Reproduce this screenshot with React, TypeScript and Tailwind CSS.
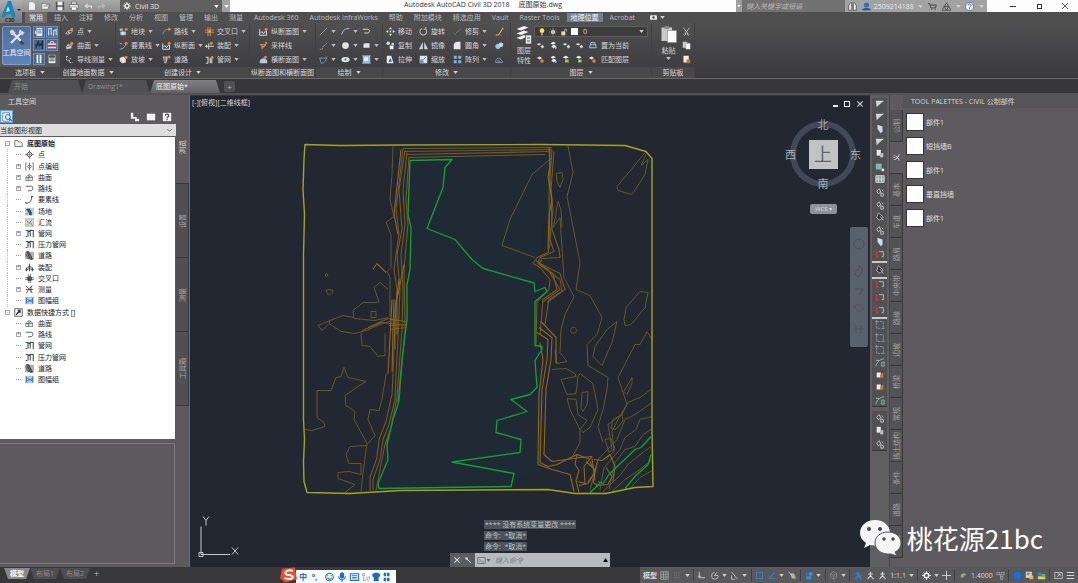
import type { ReactNode } from "react";
import clsx from "clsx";

/* ---------- icons ---------- */

const W = "#d4d6d8";
const B = "#7fb2e6";
const O = "#e8862e";

const glyphs: Record<string, ReactNode> = {
  newFile: <path d="M2 1h6l2 3v7H2z" fill="#f2f2f2" stroke="#777" strokeWidth=".6" />,
  open: <path d="M1 3h4l1 1h4v2l-2 4H1zM3 6h8" fill="#ececec" stroke="#666" strokeWidth=".8" />,
  save: <><path d="M1 1h10v10H1z" fill="#555" /><path d="M3 1h6v4H3zM3 7h6v4H3z" fill="#f0f0f0" /></>,
  print: <><path d="M3 1h6v3H3zM1 4h10v5H1z" fill="#eee" stroke="#555" strokeWidth=".8" /><path d="M3 7h6v4H3z" fill="#fff" stroke="#555" strokeWidth=".6" /></>,
  undo: <path d="M10 9V6H3M5.500 3.500L3 6l2.500 2.500" fill="none" stroke="#ddd" strokeWidth="1.500" />,
  redo: <path d="M2 9V6h7M6.500 3.500L9 6 6.500 8.500" fill="none" stroke="#bbb" strokeWidth="1.500" />,
  gear: <><circle cx="6" cy="6" r="3" fill="none" stroke="#eee" strokeWidth="2" /><path d="M6 0v3M6 9v3M0 6h3M9 6h3M2 2l2 2M8 8l2 2M10 2L8 4M4 8l-2 2" stroke="#eee" strokeWidth="1.200" /></>,
  binoculars: <path d="M1 11V5l2-4h2v10zM11 11V5L9 1H7v10zM5 5h2" fill="#eee" stroke="#444" />,
  user: <><circle cx="6" cy="4" r="3.500" fill="#2f6fc0" /><path d="M0 11c1-4 11-4 12 0z" fill="#1f4f93" /></>,
  cart: <path d="M0 2h2l2 6h6l1-4H3M4 10h1M9 10h1" fill="none" stroke="#444" strokeWidth="1.300" />,
  appA: <path d="M6 1l3 5H3zM3 6l3 5H0zM9 6l3 5H6z" fill="none" stroke="#444" strokeWidth="1.100" />,
  help: <><circle cx="6" cy="6" r="5.500" fill="#f3f6fb" stroke="#3c66a8" /><path d="M4 4.500c0-2.500 4-2.500 4 0 0 1.500-2 1.500-2 3M6 8.500v1.300" fill="none" stroke="#2f58a0" strokeWidth="1.300" /></>,
  tools: <><path d="M2 10L9 3M3 3l7 7" stroke="#dfe3e8" strokeWidth="1.600" /><path d="M1 2l2-1 2 2-1 2-2-.5zM8 1l3 2-1.500 2L7 3z" fill="#cfd5dd" /><path d="M9 8l2 2-1.500 1.500-2-2z" fill="#444" /></>,
  paper: <><path d="M3 1h7v10H3z" fill="#eaf1fa" /><path d="M4 3h5M4 5h5M4 7h5" stroke="#4a6fa5" /><path d="M1 4l3 3-3 2z" fill={W} /></>,
  columns: <path d="M2 3v7M5 1v9M8 4v7M11 2v8M1 2h4M8 4h3" stroke="#e5edf7" strokeWidth="1.200" fill="none" />,
  survey: <path d="M2 10l3-8 2 5 3-5v9M1 6h10" stroke="#1f2a3a" strokeWidth="1.400" fill="none" />,
  toolbox: <><path d="M1 4h10v6H1z" fill="#d5d9e0" /><path d="M1 6h10v2H1z" fill="#c33" /><path d="M4 4V2h4v2" fill="none" stroke="#eee" /></>,
  column: <><path d="M3 1h6v10H3z" fill="#e4ecec" /><path d="M5 1h2v10H5z" fill="#6b8f8b" /></>,
  calc: <><path d="M2 1h8v10H2z" fill="#eee" /><path d="M3 2h6v2H3zM3 6h6M3 8h6" stroke="#444" fill="#555" /></>,
  point: <><path d="M1 9c2-4 5-5 9-4-2 4-5 5-9 4z" fill="none" stroke={W} /><circle cx="5" cy="7" r="1.200" fill={W} /><circle cx="9" cy="3" r="2" fill={O} /></>,
  surface: <><path d="M1 8l3-4 6 1-2 5-6 1z" fill="#c9ced2" stroke="#777" strokeWidth=".5" /><path d="M2 8l5-2 2 1" stroke="#555" fill="none" /><circle cx="9" cy="3" r="2" fill={O} /></>,
  traverse: <path d="M2 2v5h4v3h4M2 2h2M6 5l3-1" stroke={W} fill="none" strokeDasharray="2 1" strokeWidth="1.300" />,
  parcel: <><path d="M1 2h4v3H1zM2 6h7v5H2z" fill="#9fc4ea" /><path d="M2 8h7M5 6v5" stroke="#fff" strokeWidth=".7" /><circle cx="9.500" cy="3" r="2" fill={O} /></>,
  feature: <><path d="M1 11c4 0 7-3 8-7M1 3l3 1" stroke="#9db4cf" fill="none" strokeWidth="1.200" /><circle cx="9.500" cy="3" r="2" fill={O} /></>,
  grading: <><path d="M1 4l5-2 3 3v5l-5 1-3-3z" fill="#e6e6e6" /><path d="M1 8l3-1v4z" fill="#bbb" /><circle cx="9.500" cy="3" r="2" fill={O} /></>,
  align: <><path d="M1 10c1-5 4-7 8-7" stroke="#5b83d8" fill="none" strokeWidth="1.500" /><circle cx="9.500" cy="3" r="2" fill={O} /></>,
  profile: <><path d="M1 3v8h9V5M2 8l2-2 2 3 3-4" stroke="#d8e2ee" fill="none" strokeWidth="1.300" /><circle cx="9.500" cy="3" r="2" fill={O} /></>,
  corridor: <><path d="M1 2h7l-2 9H3z" fill="#b7c0c6" /><path d="M4 3v7" stroke="#454545" strokeWidth="1.300" /><circle cx="9.500" cy="2.500" r="2" fill={O} /></>,
  cross: <><path d="M0 4h12M0 7h12M4 0v12M7 0v12" stroke={O} strokeWidth="1.200" /><path d="M5 5h2v2H5z" fill="#eee" /></>,
  assembly: <><path d="M0 7h12M5 3v8M2 5v4" stroke={W} strokeWidth="1.300" /><circle cx="8.500" cy="3" r="2" fill={O} /></>,
  pipe: <><path d="M1 3h3v8M7 5v6M1 11h3M9 11V5H6" stroke={W} fill="none" strokeWidth="1.500" /><circle cx="9.500" cy="3" r="2" fill={O} /></>,
  sample: <><path d="M1 5h8M4 5v6M4 8c3 0 4-1 5-4" stroke="#d99a5a" fill="none" strokeWidth="1.400" /><circle cx="9.500" cy="2.500" r="1.500" fill={O} /></>,
  section: <><path d="M1 8c2-5 8-5 10 0v3H1z" fill="#b9c6ea" /><circle cx="8.500" cy="3" r="2" fill={O} /></>,
  line: <path d="M1 11L11 1" stroke="#a8aaac" strokeWidth="1" />,
  polyline: <path d="M1 11h3l2-5h2l3-4" stroke="#a8aaac" fill="none" strokeDasharray="2 1" />,
  spline: <path d="M1 4l2 7M3 11c5 0 6-4 8-9M1 4h9" stroke="#8fa9c9" fill="none" />,
  arc: <path d="M1 10C2 4 6 2 11 2" stroke="#b6c7ea" fill="none" strokeWidth="1.300" />,
  circle: <circle cx="6" cy="6" r="4.500" fill="#e1e1e1" />,
  ellipse: <><ellipse cx="6" cy="6" rx="5.500" ry="3.500" fill="#dde4ea" /><circle cx="6" cy="6" r="1.200" fill="#555" /></>,
  uturn: <path d="M1 3h6c4 0 4 5 0 5H3" stroke={W} fill="none" strokeWidth="1.300" />,
  rect: <path d="M2 4l2-1h6v6H2z" fill="#e6e6e6" />,
  hatch: <><path d="M1 1h10v10H1z" fill="#8fbfe8" /><path d="M3 3h5v5H3z" fill="#eef" /><path d="M0 1h12M0 11h12" stroke="#e8eef4" strokeWidth=".6" /></>,
  move: <path d="M6 0l2 3H4zM6 12l2-3H4zM0 6l3-2v4zM12 6L9 4v4zM5 5h2v2H5z" fill="#e3e6e9" />,
  copy: <><circle cx="3" cy="3" r="2.300" fill="#cfe0f4" /><circle cx="9" cy="4" r="1.800" fill={W} /><path d="M5 6h5v5H5z" fill="#eee" /></>,
  stretch: <><path d="M1 1h6l3 10H1z" fill="#e9eef4" /><path d="M3 9l3-5 2 5z" fill="#3d6090" /></>,
  rotate: <path d="M4 2a4.500 4.500 0 1 0 5 1M9 0v3H6" fill="none" stroke="#b9bdc1" strokeWidth="1.400" />,
  mirror: <path d="M5 1v10H0zM7 1v10h5z" fill="#cdd5df" />,
  scale: <><path d="M1 1h10v10H1z" fill="#d7e3f3" /><path d="M1 6h5v5H1z" fill="#7895bf" /><path d="M6 6l3-3" stroke="#456" /></>,
  trim: <path d="M1 8l3 3M4 8l7-6" stroke="#6e8578" strokeWidth="1.200" />,
  fillet: <path d="M1 11V6c0-3 2-5 5-5h4v10z" fill="#e8e8e8" />,
  array: <path d="M1 1h4v4H1zM7 1h4v4H7zM1 7h4v4H1zM7 7h4v4H7z" fill={B} />,
  brush: <><path d="M1 11l4-1 6-9" stroke="#e6b23c" strokeWidth="1.600" fill="none" /><path d="M3 11h6" stroke="#c8553a" /></>,
  explode: <><circle cx="4" cy="7" r="3.500" fill="#9cc5f0" /><circle cx="8" cy="5" r="3" fill="#c4ddf6" /></>,
  offset: <path d="M1 10V7l3-3 3 1 3 4v1zM3 8h4" fill="none" stroke="#6fa0d8" strokeWidth="1.200" />,
  layers: <><path d="M1 2l5-2 3 1-5 2zM1 5l5-2 3 1-5 2zM1 8l5-2 2 1-4 2z" fill="#f4f4f4" /><path d="M7 6h4v6H7z" fill="#e9e9e9" stroke="#555" strokeWidth=".5" /><path d="M8 8h2M8 10h2" stroke="#555" strokeWidth=".7" /></>,
  layerA: <><path d="M1 4l3-1 3 1-3 2z" fill="#e8e8e8" /><path d="M6 7l3-2 2 3-3 2z" fill={W} /></>,
  layerB: <><path d="M2 3l4-2 3 2-4 2zM3 7l4-2 3 2-4 3z" fill="#eee" /><circle cx="9" cy="9" r="1.500" fill={B} /></>,
  layerC: <><path d="M1 3l4-2 4 2-4 2z" fill="#eee" /><path d="M4 6h5v4H4z" fill="#7bc04b" /><circle cx="6" cy="8" r="1.300" fill="#f3c93f" /></>,
  layerD: <><path d="M1 4l4-2 3 2-3 2z" fill="#e6e6e6" /><path d="M6 6h4v4H6z" fill={O} /></>,
  layerE: <path d="M2 9l2-7h5l2 7zM3 5h7" fill="none" stroke="#9ec5f1" strokeWidth="1.300" />,
  bulb: <><circle cx="6" cy="4" r="3.500" fill="#f6e36a" /><path d="M4.500 8h3v3h-3z" fill="#aaa" /></>,
  sun: <><circle cx="6" cy="6" r="3" fill="#e9e4c0" /><path d="M6 0v12M0 6h12M2 2l8 8M10 2l-8 8" stroke="#b5b196" strokeWidth=".8" /></>,
  lock: <><path d="M2 5h6v6H2z" fill="#e5e0a0" /><path d="M7 5V2h3v3" fill="none" stroke={W} /></>,
  paste: <><path d="M1 1h7v9H1z" fill="#c9c9c9" /><path d="M3 0h3v2H3z" fill="#888" /><path d="M5 3h6v8H5z" fill="#fafafa" stroke="#888" strokeWidth=".4" /></>,
  cut: <path d="M2 1l6 8M10 1L4 9M2 10a1.500 1.500 0 1 0 2-2M10 10a1.500 1.500 0 1 1-2-2" stroke={W} fill="none" />,
  copyDoc: <><path d="M1 1h6v8H1z" fill="#ccc" /><path d="M5 3h6v8H5z" fill="#fff" stroke="#777" strokeWidth=".5" /></>,
  pasteDoc: <><path d="M2 1h7v9H2z" fill="#eee" /><path d="M6 6h5v5H6z" fill="#c96b35" /></>,
  camera: <><rect x="0" y="2" width="12" height="8" rx="2" fill="#e8e8e8" /><circle cx="6" cy="6" r="2" fill="#333" /></>,
  folder: <path d="M1 10V2h4l1 2h4l1 2v4z" fill="#f5f5f5" stroke="#555" />,
  shortcut: <><path d="M1 1h10v10H1z" fill="#fff" stroke="#333" /><path d="M3 9l5-6M5 3h3v4" fill="none" stroke="#222" strokeWidth="1.600" /></>,
  tPoint: <><path d="M6 2l4 4-4 4-4-4z" fill="none" stroke="#444" strokeWidth="1.300" /><path d="M6 0v12M0 6h12" stroke="#555" strokeWidth=".8" /></>,
  tGroup: <path d="M2 1H1v10h1M10 1h1v10h-1M6 3l3 3-3 3-3-3zM6 1v10" fill="none" stroke="#555" />,
  tSurface: <path d="M1 6l4-4 5 3v5H1zM1 6h9M5 2v8M3 8l5-5" fill="#e3e9e6" stroke="#56635f" strokeWidth=".9" />,
  tAlign: <path d="M1 3h8c2 0 2 6-1 6H4" fill="none" stroke="#555" strokeWidth="1.200" />,
  tFeature: <path d="M1 11c5 0 8-3 8-9M0 10l2 1M8 2h3" fill="none" stroke="#445" strokeWidth="1.300" />,
  tSite: <><path d="M0 1h12v10H0z" fill="#b6d2e6" /><path d="M1 3l5-1 3 5v4H6L4 6z" fill="#36506a" /><path d="M1 8h3v3H1z" fill="#d7b54d" /></>,
  tCatch: <><path d="M0 1h12v10H0z" fill="#cfd9cf" stroke="#78867c" strokeWidth=".6" /><path d="M2 3l3 4 2-1 3 4M9 3L6 6" stroke="#4b6b86" fill="none" /><path d="M2 8h3v2H2z" fill="#d9bd53" /></>,
  tPipe: <path d="M1 2h3v8M4 4l3-2v8M7 2h4v9M1 10h2" fill="none" stroke="#3d4a4d" strokeWidth="1.400" />,
  tRoad: <><path d="M0 1h12v10H0z" fill="#aeb3ad" /><path d="M2 1h3l5 10H7zM1 4l4 7" stroke="#333" strokeWidth="1.100" fill="#666" /></>,
  tAssembly: <path d="M0 9h4V5h4v4h4M6 1v10M2 6v5M10 6v5" fill="none" stroke="#444" strokeWidth="1.200" />,
  tCross: <><circle cx="6" cy="6" r="3.500" fill="#666" /><path d="M0 5h12M0 7.500h12M5 0v12M7.500 0v12" stroke="#444" strokeWidth=".9" /></>,
  tSurvey: <path d="M1 1l4 4-3 6M5 5l5-4M5 5l5 6M1 6h10M8 2v8" fill="none" stroke="#444" strokeWidth="1.100" />,
  tFrame: <><path d="M0 1h12v10H0z" fill="#a8cdea" /><path d="M2 2v8M10 2v8M2 4l8 4M2 8l8-3" stroke="#3a6a97" fill="none" /></>,
  search: <><path d="M1 1h8v10H1z" fill="#fff" stroke="#4b7ca8" /><circle cx="7" cy="6" r="3" fill="#cfe6f8" stroke="#2b5d8e" /><path d="M9 8l3 3" stroke="#2b5d8e" strokeWidth="1.500" /></>,
  filter: <path d="M1 1h3v5h4v2h3v3H6V8H1z" fill="#eee" />,
  winBox: <path d="M1 2h10v8H1z" fill="#f4f4f4" />,
  qBox: <><path d="M1 1h10v10H1z" fill="#f4f4f4" /><path d="M4 4.500c0-2.500 4-2.500 4 0 0 1.500-2 1.500-2 3M6 8.500v1.300" fill="none" stroke="#444" strokeWidth="1.400" /></>,
  vTri: <path d="M1 2h10L6 6l-4 4z" fill="#cfd4d8" />,
  vPage: <path d="M3 1l6 2v6l-2 2-4-5z" fill="#cfdcea" />,
  vDoc: <><path d="M2 1h5v7H2z" fill="#e6e6e6" /><path d="M6 5h4v5H6z" fill="#bbb" /></>,
  vTeal: <><path d="M1 2h7v7H1z" fill="#7fb9b3" /><path d="M8 8h3v3H8z" fill="#eee" /></>,
  vGlobe: <path d="M1 2h10v8H1zM1 6h10M4 2v8M8 2v8" fill="#8e9896" stroke="#dfe6e4" />,
  vDots: <path d="M2 5l3-3 2 4-3 2zM7 7l3 1v3H7zM8 3l2 2" fill="none" stroke="#d0d0d0" />,
  vDark: <path d="M4 1l6 5-4 4-4-3zM6 5l4 5" fill="#2d2d2d" stroke="#c4c4c4" />,
  vRed: <><path d="M1 3h3M1 8h3M2 1v9" stroke="#c23b3b" strokeWidth="1.400" /><path d="M5 2h5v6H8" stroke="#cacaca" fill="none" /></>,
  vBox: <path d="M2 2h8v8H2zM0 2h3M9 10h3M2 0v3" fill="none" stroke="#8798b4" strokeDasharray="3 1" />,
  vCurve: <path d="M1 11C3 5 6 3 11 2M1 4h4M8 6v5h3V6z" fill="none" stroke="#9cc7c3" />,
  vOrange: <><path d="M2 3h5v6H2z" fill="#eee" /><path d="M6 6l4-3v6H6z" fill="#cf7638" /></>,
  sGrid: <path d="M1 1h10v10H1zM1 4.500h10M1 8h10M4.500 1v10M8 1v10" fill="none" stroke="#aaa" />,
  sDots: <path d="M2 2v9M5 2v9M8 2v9" stroke="#888" strokeDasharray="1 2" />,
  sOrtho: <path d="M3 1v8h8M1 7h4" fill="none" stroke={W} strokeWidth="1.100" />,
  sPolar: <path d="M6 2a4.500 4.500 0 1 0 5 5M6 6h5M6 6L9 2" fill="none" stroke={W} />,
  sIso: <path d="M2 1l8 10M2 6v5h5" fill="none" stroke={W} />,
  sBox: <path d="M2 2h8v8H2z" fill="none" stroke="#2f7dd6" strokeWidth="1.600" />,
  sAngle: <path d="M2 10L10 2M2 10h9" fill="none" stroke="#2f7dd6" strokeWidth="1.600" />,
  sLeaf: <><path d="M3 3h5l3 7H5z" fill="#9cb08b" /><path d="M1 1l7 9" stroke={W} /></>,
  sPeople: <><circle cx="4" cy="4" r="3" fill="#1f6fc4" /><path d="M3 7h7v4H3z" fill="#2f8de6" /><path d="M7 2h4v4H7z" fill="#3aa0ee" /></>,
  sCube: <path d="M6 1l4 2.500v5L6 11 2 8.500v-5zM6 6v5M2 3.500L6 6l4-2.500" fill="none" stroke="#8e8e8e" />,
  sMan: <path d="M6 1v5M6 6l-4 5M6 6l4 5M3 4h6" fill="none" stroke={W} strokeWidth="1.600" />,
  sManBlue: <path d="M6 1v5M6 6l-4 5M6 6l4 5M2 3l8 4" fill="none" stroke="#2b80e0" strokeWidth="2" />,
  sPlus: <path d="M6 0v12M0 6h12" stroke={W} strokeWidth="1.200" />,
  sEarth: <path d="M2 7c1-5 7-5 8-2-3 0-3 3-6 5z" fill="#97a286" />,
  sTree: <path d="M1 2h4v3H1zM7 2h4v3H7zM6 7h3v4H6zM5 4l2 4" fill="none" stroke="#aaa" />,
  sBall: <><path d="M0 0h12v12H0z" fill="#3b5c85" /><circle cx="6" cy="6" r="5" fill="#1173e0" /></>,
  sHw: <><path d="M1 1h8v8H1z" fill="#ddd" /><path d="M6 6h5v5H6z" fill="#e4c43f" /><path d="M2 3h5M2 5h4" stroke="#555" /></>,
  sPic: <><path d="M1 2h5v4H1z" fill="#3f7fd0" /><path d="M1 7h10v4H1z" fill="#dfd357" /><path d="M6 4h5v4H6z" fill="#65b25a" /></>,
  sFull: <path d="M1 2h10v8H1zM4 8l4-4M5 4h3v3" fill="none" stroke={W} />,
  sMenu: <path d="M1 2h10M1 6h10M1 10h10" stroke={W} strokeWidth="1.400" />,
  wrench: <path d="M2 2l3 0 1 3 5 5-1 1-5-5-3-1z" fill={W} />,
  close: <path d="M2 2l8 8M10 2l-8 8" stroke={W} strokeWidth="1.600" />,
  prompt: <path d="M1 2h10v8H1zM3 4l2 2-2 2M6 8h3" fill="none" stroke="#666" />,
};

const Icon = ({ name, className = "size-[10px]" }: { name: string; className?: string }) => (
  <svg viewBox="0 0 12 12" className={clsx("shrink-0", className)} aria-hidden="true">
    {glyphs[name]}
  </svg>
);

const Caret = ({ className = "fill-[#d0d0d0]" }: { className?: string }) => (
  <svg viewBox="0 0 6 4" className={clsx("h-[3px] w-[5px] shrink-0", className)} aria-hidden="true">
    <path d="M0 0h6L3 4z" />
  </svg>
);

/* ---------- title bar ---------- */

const TitleBar = () => (
  <div className="flex h-3 items-stretch bg-[#fdfdfd]">
    <div className="flex w-[98px] items-center gap-1 bg-linear-to-b from-[#a9a9a9] to-[#8f8f8f] pl-[5px]">
      {["newFile", "open", "save", "print", "undo", "redo"].map((n) => (
        <button key={n} aria-label={n}>
          <Icon name={n} />
        </button>
      ))}
    </div>
    <label className="flex w-[102px] items-center gap-1 bg-[#606060] px-[3px]">
      <Icon name="gear" className="size-2" />
      <select aria-label="workspace" className="min-w-0 flex-1 appearance-none text-[7px] leading-none text-[#e4e4e4]">
        <option>Civil 3D</option>
      </select>
      <Caret className="fill-white" />
    </label>
    <button aria-label="customize" className="flex w-2 items-center justify-center bg-[#a3a3a3]">
      <Caret className="fill-white" />
    </button>
    <div className="flex flex-1 items-start justify-center gap-[9px] pt-px text-[7px] leading-[8px] text-[#333]">
      <span>Autodesk AutoCAD Civil 3D 2018</span>
      <span>底图原始.dwg</span>
    </div>
    <div className="flex w-[109px] items-center bg-[#727272]">
      <span className="flex h-full w-[6px] items-center justify-center bg-[#a0a0a0] text-[5px] text-white">▸</span>
      <input
        aria-label="search"
        placeholder="键入关键字或短语"
        className="min-w-0 flex-1 px-1 text-[7px] italic leading-none outline-none placeholder:text-[#b9b9b9]"
      />
    </div>
    <div className="flex w-[142px] items-center justify-between bg-[#a2a2a2] px-[3px]">
      <Icon name="binoculars" className="size-[9px]" />
      <button className="flex items-center gap-[3px] text-[7px] leading-none text-[#e6e6e6]">
        <Icon name="user" className="size-[9px]" />
        2509214188
      </button>
      <Caret />
      <Icon name="cart" className="size-[9px]" />
      <Icon name="appA" className="size-[9px]" />
      <Caret />
      <Icon name="help" className="size-[9px]" />
      <Caret />
    </div>
    <div className="flex w-[91px] items-center justify-between pl-[23px] pr-[10px]">
      <button aria-label="minimize" className="h-px w-[6px] bg-[#333]" />
      <button aria-label="restore" className="size-[5px] border border-[#333]" />
      <button aria-label="close">
        <svg viewBox="0 0 6 6" className="size-[6px]">
          <path d="M0 0l6 6M6 0L0 6" stroke="#333" strokeWidth=".8" />
        </svg>
      </button>
    </div>
  </div>
);

const ribbonTabs = [
  "插入", "注释", "修改", "分析", "视图", "管理", "输出", "测量", "Autodesk 360", "Autodesk InfraWorks",
  "帮助", "附加模块", "精选应用", "Vault", "Raster Tools",
];

const RibbonTabs = () => (
  <nav className="flex h-[11px] items-center gap-[11px] bg-[#4f4f50] pl-[3px] text-[7px] leading-none text-[#bcbcbc]">
    <button className="-mr-1 h-full bg-[#6d6d6e] px-1 text-[#f0f0f0]">常用</button>
    {ribbonTabs.map((t) => (
      <button key={t} className="whitespace-nowrap">
        {t}
      </button>
    ))}
    <button className="-mx-1 h-[9px] bg-[#76808e] px-1 text-[#eef2f6]">地理位置</button>
    <button>Acrobat</button>
    <span className="flex items-center gap-[3px] pl-1">
      <Icon name="camera" className="size-[7px]" />
      <Caret />
    </span>
  </nav>
);

/* ---------- ribbon ---------- */

type Tool = { icon: string; label?: string; menu?: boolean };

const ToolColumn = ({ tools, className }: { tools: Tool[]; className?: string }) => (
  <div className={clsx("flex flex-col gap-[3px]", className)}>
    {tools.map((t) => (
      <button key={t.icon} aria-label={t.label ?? t.icon} className="flex h-[11px] items-center gap-[3px] whitespace-nowrap">
        <Icon name={t.icon} className="size-[9px]" />
        {t.label && <span>{t.label}</span>}
        {t.menu && <Caret className="fill-[#bbb]" />}
      </button>
    ))}
  </div>
);

const Panel = ({ title, menu = true, className, children }: { title: string; menu?: boolean; className: string; children: ReactNode }) => (
  <section className={clsx("flex shrink-0 flex-col border-r border-[#414142]", className)}>
    <div className="flex flex-1 items-start px-[3px] pt-[3px]">{children}</div>
    <footer className="flex h-[11px] items-center justify-center gap-1 whitespace-nowrap bg-[#484849]">
      {title}
      {menu && <Caret />}
    </footer>
  </section>
);

const Ribbon = () => (
  <div className="flex h-14 border-b border-[#6a6a6b] bg-linear-to-b from-[#505051] to-[#3a393b] text-[7px] leading-none text-[#d6d6d6]">
    <Panel title="选项板" className="w-[61px] bg-[#58585a]">
      <div className="-ml-px flex gap-[2px]">
        <button className="flex h-[39px] w-[29px] flex-col items-center gap-[3px] whitespace-nowrap rounded-xs border border-[#7d9cc6] bg-linear-to-b from-[#52709d] to-[#5d83b8] pt-px text-[#e9eef6]">
          <Icon name="tools" className="size-[18px]" />
          <span>工具空间</span>
        </button>
        <div className="grid grid-cols-2 gap-px">
          {["paper", "columns", "survey", "toolbox", "column", "calc"].map((n, i) => (
            <button
              key={n}
              aria-label={n}
              className={clsx("flex size-[12px] items-center justify-center", i < 5 && "border border-[#6f8fbc] bg-[#49688f]")}
            >
              <Icon name={n} />
            </button>
          ))}
        </div>
      </div>
    </Panel>
    <Panel title="创建地面数据" className="w-[55px]">
      <ToolColumn
        className="pl-px"
        tools={[
          { icon: "point", label: "点", menu: true },
          { icon: "surface", label: "曲面", menu: true },
          { icon: "traverse", label: "导线测量", menu: true },
        ]}
      />
    </Panel>
    <Panel title="创建设计" className="w-[134px]">
      <ToolColumn
        className="w-11"
        tools={[
          { icon: "parcel", label: "地块", menu: true },
          { icon: "feature", label: "要素线", menu: true },
          { icon: "grading", label: "放坡", menu: true },
        ]}
      />
      <ToolColumn
        className="w-11"
        tools={[
          { icon: "align", label: "路线", menu: true },
          { icon: "profile", label: "纵断面", menu: true },
          { icon: "corridor", label: "道路" },
        ]}
      />
      <ToolColumn
        tools={[
          { icon: "cross", label: "交叉口", menu: true },
          { icon: "assembly", label: "装配", menu: true },
          { icon: "pipe", label: "管网", menu: true },
        ]}
      />
    </Panel>
    <Panel title="纵断面图和横断面图" menu={false} className="w-[66px]">
      <ToolColumn
        className="pl-[6px]"
        tools={[
          { icon: "profile", label: "纵断面图", menu: true },
          { icon: "sample", label: "采样线" },
          { icon: "section", label: "横断面图", menu: true },
        ]}
      />
    </Panel>
    <Panel title="绘制" className="w-[67px]">
      <ToolColumn className="w-[22px]" tools={["line", "polyline", "spline"].map((icon) => ({ icon, menu: true }))} />
      <ToolColumn className="w-[21px]" tools={["arc", "circle", "ellipse"].map((icon) => ({ icon, menu: true }))} />
      <ToolColumn tools={[{ icon: "uturn" }, { icon: "rect", menu: true }, { icon: "hatch", menu: true }]} />
    </Panel>
    <Panel title="修改" className="w-32">
      <ToolColumn
        className="w-[33px]"
        tools={[
          { icon: "move", label: "移动" },
          { icon: "copy", label: "复制" },
          { icon: "stretch", label: "拉伸" },
        ]}
      />
      <ToolColumn
        className="w-[34px]"
        tools={[
          { icon: "rotate", label: "旋转" },
          { icon: "mirror", label: "镜像" },
          { icon: "scale", label: "缩放" },
        ]}
      />
      <ToolColumn
        className="w-[42px]"
        tools={[
          { icon: "trim", label: "修剪", menu: true },
          { icon: "fillet", label: "圆角", menu: true },
          { icon: "array", label: "阵列", menu: true },
        ]}
      />
      <ToolColumn tools={[{ icon: "brush" }, { icon: "explode" }, { icon: "offset" }]} />
    </Panel>
    <Panel title="图层" className="w-[141px]">
      <button className="flex w-5 flex-col items-center gap-[3px]">
        <Icon name="layers" className="size-[18px]" />
        <span>图层</span>
        <span>特性</span>
      </button>
      <div className="flex flex-1 flex-col gap-[3px]">
        <label className="flex h-[11px] items-center gap-[3px] border border-[#5c5c5d] bg-[#3c3c3d] px-[3px]">
          <Icon name="bulb" className="size-2" />
          <Icon name="sun" className="size-2" />
          <Icon name="lock" className="size-2" />
          <span className="size-[7px] bg-white" />
          <select aria-label="layer" className="min-w-0 flex-1 appearance-none pl-[2px] leading-none">
            <option>0</option>
          </select>
          <Caret />
        </label>
        {[
          { icons: ["layerA", "layerB", "layerA", "layerA", "layerE"], label: "置为当前" },
          { icons: ["layerD", "layerB", "layerC", "layerC", "layerD"], label: "匹配图层" },
        ].map((row) => (
          <div key={row.label} className="flex h-[11px] items-center gap-1 pl-[2px]">
            {row.icons.map((n, i) => (
              <Icon key={i} name={n} className="size-[9px]" />
            ))}
            <button>{row.label}</button>
          </div>
        ))}
      </div>
    </Panel>
    <Panel title="剪贴板" menu={false} className="w-[43px]">
      <button className="flex w-[27px] flex-col items-center gap-[3px]">
        <Icon name="paste" className="size-[18px]" />
        <span>粘贴</span>
        <Caret />
      </button>
      <ToolColumn tools={[{ icon: "cut" }, { icon: "copyDoc" }, { icon: "pasteDoc" }]} />
    </Panel>
  </div>
);

const DocTabs = () => (
  <div className="flex h-4 items-end border-b-2 border-[#525354] bg-[#373638] pl-2 text-[7px] leading-none">
    {[
      { label: "开始", width: "w-[74px]" },
      { label: "Drawing1*", width: "w-[68px]" },
      { label: "底图原始*", width: "w-[70px]", active: true },
    ].map((t) => (
      <button
        key={t.label}
        className={clsx(
          "h-[13px] pl-[6px] text-left [clip-path:polygon(4px_0,calc(100%-4px)_0,100%_100%,0_100%)]",
          t.width,
          t.active ? "bg-linear-to-b from-[#828284] to-[#626163] text-[#f2f2f2]" : "bg-[#515153] text-[#8e8e90]",
        )}
      >
        {t.label}
      </button>
    ))}
    <button className="mb-px ml-1 size-[11px] rounded-xs bg-[#515153] text-[8px] text-[#bbb]">+</button>
  </div>
);

/* ---------- toolspace ---------- */

type Row = { label: string; icon: string; root?: boolean; plus?: boolean };

const rows: Row[] = [
  { label: "底图原始", icon: "folder", root: true },
  { label: "点", icon: "tPoint" },
  { label: "点编组", icon: "tGroup", plus: true },
  { label: "曲面", icon: "tSurface", plus: true },
  { label: "路线", icon: "tAlign", plus: true },
  { label: "要素线", icon: "tFeature" },
  { label: "场地", icon: "tSite" },
  { label: "汇流", icon: "tCatch" },
  { label: "管网", icon: "tPipe", plus: true },
  { label: "压力管网", icon: "tPipe" },
  { label: "道路", icon: "tRoad" },
  { label: "装配", icon: "tAssembly", plus: true },
  { label: "交叉口", icon: "tCross" },
  { label: "测量", icon: "tSurvey", plus: true },
  { label: "图幅组", icon: "tFrame" },
  { label: "数据快捷方式 []", icon: "shortcut", root: true },
  { label: "曲面", icon: "tSurface" },
  { label: "路线", icon: "tAlign", plus: true },
  { label: "管网", icon: "tPipe" },
  { label: "压力管网", icon: "tPipe" },
  { label: "道路", icon: "tRoad" },
  { label: "图幅组", icon: "tFrame" },
];

const Expander = ({ minus }: { minus?: boolean }) => (
  <span className="flex size-[5px] items-center justify-center border border-[#aaa] bg-white text-[5px] leading-none text-[#555]">
    {minus ? "-" : "+"}
  </span>
);

const VerticalTab = ({ label, className }: { label: string; className?: string }) => (
  <button className={clsx("flex items-center justify-center border-b border-[#39383a] text-[7px] leading-none", className)}>
    <span className="rotate-180 [text-orientation:sideways] [writing-mode:vertical-rl]">{label}</span>
  </button>
);

const Toolspace = () => (
  <aside className="flex w-[190px] shrink-0 bg-[#5c5a5c]">
    <div className="flex w-44 flex-col">
      <h2 className="h-[14px] pl-2 text-[7px] leading-[14px] text-[#dcdcdc]">工具空间</h2>
      <div className="flex h-[15px] items-center gap-[6px] pr-1">
        <button aria-label="search" className="mr-auto flex h-[13px] w-[13px] items-center justify-center border border-[#5aa0dc] bg-[#d4e8f8]">
          <Icon name="search" />
        </button>
        <Icon name="filter" />
        <Icon name="winBox" />
        <Icon name="qBox" />
      </div>
      <label className="flex h-3 items-center bg-[#dedede] pr-1">
        <select aria-label="view" className="min-w-0 flex-1 appearance-none text-[7px] leading-none text-[#222]">
          <option>当前图形视图</option>
        </select>
        <svg viewBox="0 0 6 4" className="h-[3px] w-[5px]">
          <path d="M0 0l3 3 3-3" fill="none" stroke="#555" />
        </svg>
      </label>
      <div className="mr-px mt-px h-[302px] bg-white pt-px">
        <ul className="flex h-[247px] flex-col text-[7px] leading-none text-[#222]">
          {rows.map((r, i) => (
            <li
              key={i}
              className={clsx(
                "flex flex-1 items-center gap-1",
                r.root ? "pl-[5px]" : "ml-[7px] border-l border-dotted pl-2",
                !r.root && (i < 15 ? "border-[#bbb]" : "border-transparent"),
              )}
            >
              {r.root ? (
                <Expander minus />
              ) : (
                <span className="flex w-[5px] justify-center">
                  {r.plus ? <Expander /> : <span className="w-full border-t border-dotted border-[#999]" />}
                </span>
              )}
              <Icon name={r.icon} className="size-[9px]" />
              <span className={clsx(i === 0 && "font-bold")}>{r.label}</span>
            </li>
          ))}
        </ul>
      </div>
      <div className="mr-px mt-1 mb-[3px] flex-1 border-y border-r border-[#7c7a7c]" />
    </div>
    <div className="flex flex-1 flex-col border-r border-[#6e6c6e] pt-[15px] text-[#a5a5a5]">
      <VerticalTab label="浏览" className="h-[74px] text-[#dedede]" />
      {["设置", "测量", "工具箱"].map((t) => (
        <VerticalTab key={t} label={t} className="h-[74px] border-r bg-[#504f51]" />
      ))}
    </div>
  </aside>
);

/* ---------- drawing ---------- */

const contours = {
  dim: [
    "M393 147L392 175 390 200 394 217 386 223 391 235 391 268 387 272",
    "M387 272L390 278 390 318M388 290L380 283 374 288 379 302 376 303 363 303 353 311 354 319 375 321 388 318",
    "M353 318L343 316 330 321 329 324 341 332 355 334 366 331 380 325 390 322",
    "M330 321L318 326 322 331 329 324M371 312h5v6h-5z",
    "M361 333L362 346 370 347 378 357 385 356 385 334",
    "M305 430L312 431 325 427 324 423 317 418 317 391 331 391 336 378 341 377 344 368 348 378 366 382 358 387 345 396 346 406 355 412 354 420 367 444 365 458 363 474 361 492",
    "M388 374L386 375 382 400 379 411 370 410 368 420 375 436 367 445",
    "M367 446L350 447 346 455 349 464 361 464 361 475M361 475L349 472 338 473 338 479 355 485 345 493",
    "M325 275l2-1 1 2-2 1zM326 291l3-1 4 1-1 3-4 1z",
    "M552 158L532 175 510 220 502 246 535 258",
    "M568 146L573 173 567 197 580 263 576 290 590 296 602 318 597 335 587 345 588 366 608 378 607 390 603 410 598 427 603 443",
    "M556 174l6-1 1 7-3 8-3-6zM562 228L561 210 558 202 554 225 553 228 560 218 564 278 574 297",
    "M574 297L565 315 561 330 560 353 567 362 557 364 555 350M571 329a3 3 0 1 0 5 0 3 3 0 0 0-5 0",
    "M645 153L633 168 617 187 618 191 632 195 645 175 648 160 641 166 647 153",
    "M624 320L626 308 640 292 648 293 645 308 631 325 625 326z",
    "M617 322L612 343 602 366 593 357 595 347 607 330z",
    "M652 340L647 332 640 345 635 345 618 378 627 405 622 415 608 425 612 450",
    "M632 378l-8 14 3 3 5-11z",
    "M552 370L566 369 575 374 576 377 561 380 567 395 576 394 578 377 580 374 593 384 598 410 590 428 583 433 580 430 587 421 578 415 576 400 567 399 570 410 580 430 580 443 573 456",
    "M582 393l6-1-1 13-4 7-2-3z",
    "M622 415l-9 5-2 9 5 1 7-9z",
    "M652 403L635 415 625 420 617 440 598 460 590 490M652 417L640 420 636 430 625 438 620 450 604 468 600 490",
    "M651 430L643 435 635 447 625 450 615 463 609 490M651 447L640 455 628 465 620 476 603 492M652 460L640 470 625 480 612 492",
    "M652 471L640 478 630 489M651 390L640 398 628 403 618 420 612 432 614 452 606 460M605 440l6-1 4 10-6 4z",
  ],
  brown: [
    "M403 149L396 210 399 235 394 270 397 290 395 325 393 375 392 395 386 422 379 440 377 458 370 478 370 491",
    "M405 151L399 190 402 230 397 255 400 290 398 340 396 375 395 400 389 425 383 440 380 460 373 480 373 491",
    "M407 153L403 190 405 225 401 255 403 290 402 330 399 370 397 398 391 428 385 445 382 460 376 491",
    "M409 157L406 200 408 225 404 270 405 330 400 390 399 403",
    "M403 149L552 148M404 152L552 150M406 155L550 152M409 158L545 155",
    "M390 320l17 2M368 328l20-9 18 3M389 326l18-1M362 331l20-8 25 3M390 330l17-2",
    "M550 150L549 200 550 245 548 253 537 258 533 264 540 268 550 280 549 290 537 302 536 345",
    "M552 150L550 180 553 210 550 240 554 252 540 258 538 264 553 274 557 290 543 300 540 335",
    "M554 152L551 190 552 230 559 250 560 258 542 259 540 264 560 274 565 290 549 300 545 325",
    "M536 261L548 270 560 290 542 303M538 264L560 280 562 292 547 303",
  ],
  orange: [
    "M401 150L394 215 398 235M404 265L397 300 397 335M392 300L391 320 388 374M394 300L393 330 392 372M399 280L395 310 395 350",
    "M373 270L377 264 386 273",
    "M549 148L550 165 548 178 552 200 549 215 548 250",
    "M537 333L548 340 547 360 542 390 540 463 548 467 557 465 577 455 590 460",
    "M539 328L552 338 551 360 546 390 544 455 552 462 580 458M541 322L556 338 556 364M540 343L543 360 539 395 538 465 552 470 570 475 574 492",
    "M577 455l-2 10 4 6-3 10 3 12M580 458l12-1-8 10 1 17-7-2M590 462l5 10-7 12-9 2M594 460l8 1 8-6M597 463l-4 20 5 3M606 468l6 9-4 8-12 1M610 455l5 12-2 15",
    "M592 459l3 22M596 472l-8 10M586 462l10 9",
  ],
  green: [
    "M410 161L452 160 445 168 443 188 427 229 455 240 472 260 483 269 534 283.500 535 292 545 288 547 292 535 302 535 346 542 347 542 350 535 361 537 388 530 395 511 400 527 412 497 421 496 433 521 440 520 453 452 462.500 514 474 511 487 379 489 378 484 388 460 387 445 393 420 398 405 402 360 407 320 407 285 410 270 411 228 408 215z",
    "M651 437L641 448 635 450 609 475M651 455L648 465 635 477 625 489M600 484L590 493M609 475L603 484 598 482",
  ],
};

const Drawing = () => (
  <svg viewBox="190 97 680 470" className="absolute inset-0 size-full" fill="none" strokeLinejoin="round">
    <path d="M404 150L550 155 537 300 540 350 540 470 510 488 380 490 408 300z" fill="#202a35" />
    <g stroke="#625a27" strokeWidth="1">{contours.dim.map((d) => <path key={d} d={d} />)}</g>
    <g stroke="#765a20" strokeWidth="1.100">{contours.brown.map((d) => <path key={d} d={d} />)}</g>
    <g stroke="#8d6a20" strokeWidth="1.100">{contours.orange.map((d) => <path key={d} d={d} />)}</g>
    <g stroke="#10a235" strokeWidth="1.300">{contours.green.map((d) => <path key={d} d={d} />)}</g>
    <path
      d="M305 145L340 146 403 145.500 540 145 625 146 646 152 652 159 652 350 652 430 653 487 635 488 606 494 575 494 548 490 400 491 350 494 307 493 304 482 303.500 462 304.500 440 303.500 420 303.500 255 304.500 215 303 190 304 160z"
      stroke="#a3a51c"
      strokeWidth="1.400"
    />
    <path d="M201 555V527M201 555h29M199 553h4v4h-4z" stroke="#c2c6ca" />
    <path d="M203 517l3 4 3-4M206 521v5M232 548l6 7M238 548l-6 7" stroke="#c2c6ca" />
  </svg>
);

const ViewCube = () => (
  <div className="absolute right-[13px] top-6 flex size-[68px] items-center justify-center text-[11px] leading-none text-[#a9afb6]">
    <div className="flex size-[66px] items-center justify-center rounded-full border-[6px] border-[#424856]">
      <button className="flex size-[29px] items-center justify-center bg-[#bfc3c3] text-lg leading-none text-[#5f6466]">上</button>
    </div>
    <span className="absolute -top-px">北</span>
    <span className="absolute -bottom-px">南</span>
    <span className="absolute -left-1">西</span>
    <span className="absolute -right-1">东</span>
  </div>
);

const Viewport = () => (
  <main className="relative mt-px min-w-0 flex-1 overflow-hidden bg-[#222732]">
    <Drawing />
    <div className="absolute left-[2px] top-[3px] text-[7px] leading-none text-[#d5d8dc]">[-][俯视][二维线框]</div>
    <div className="absolute right-[6px] top-1 flex items-center gap-[6px]">
      <span className="mt-1 h-[2px] w-[5px] bg-[#eee]" />
      <span className="size-[6px] border border-[#eee]" />
      <Icon name="close" className="size-2" />
    </div>
    <ViewCube />
    <button className="absolute right-[33px] top-[108px] h-[10px] w-[27px] rounded-xs bg-[#8d939d] text-[6px] leading-none text-[#d5d9de]">
      WCS ▾
    </button>
    <div className="absolute right-[2px] top-[131px] h-30 w-[18px] rounded-xs bg-[#59616c]">
      <svg viewBox="0 0 18 120" className="size-full" fill="none" stroke="#4b525d">
        <circle cx="9" cy="17" r="5" />
        <path d="M5 48c0-6 5-6 5-10M8 38l5 4-4 8-5-3M5 62h8l-4 6M4 80l5-3 5 4-5 4zM6 98v8M11 98v8M4 102h10" />
      </svg>
    </div>
    <div className="absolute bottom-0 left-[260px] flex w-[160px] flex-col gap-[2px] text-[7px] leading-none text-[#bcc0c4]">
      {["**** 没有系统变量更改 ****", "命令:  *取消*", "命令:  *取消*"].map((line, i) => (
        <p key={i} className="ml-[34px] h-[9px] self-start whitespace-pre bg-[#4d525b] px-px leading-[9px]">
          {line}
        </p>
      ))}
      <div className="flex h-[14px] items-center bg-[#b8bbbe]">
        <div className="flex h-full w-[25px] items-center justify-center gap-[3px] bg-[#5a5c60]">
          <Icon name="close" className="size-2" />
          <Icon name="wrench" className="size-2" />
        </div>
        <Icon name="prompt" className="ml-[2px] size-[9px]" />
        <Caret className="fill-[#666]" />
        <input aria-label="command" placeholder="键入命令" className="min-w-0 flex-1 px-1 italic outline-none placeholder:text-[#7d8084]" />
        <span className="pr-[2px] text-[5px] text-black">▲</span>
      </div>
    </div>
  </main>
);

/* ---------- right side ---------- */

const toolGroups = [
  { height: "h-[165px]", icons: ["vTri", "vTri", "vPage", "vTri", "vDoc", "vTeal", "vGlobe", "vDots", "vDots", "vDark", "vDots", "vPage", "vRed"] },
  { height: "h-4", icons: ["vDark"] },
  { height: "h-10", icons: ["vRed", "vRed", "vRed"] },
  { height: "h-[88px]", icons: ["vBox", "vBox", "vBox", "vCurve", "vOrange", "vOrange", "vCurve"] },
  { height: "h-10", icons: ["vDots", "vDoc", "vDots"] },
];

const ToolStrip = () => (
  <div className="flex w-[19px] shrink-0 flex-col bg-[#605f60] pt-[3px]">
    {toolGroups.map((g, i) => (
      <div
        key={i}
        className={clsx("mx-[2px] flex flex-col items-center justify-around bg-[#515052]", g.height, i < 3 ? "border-b-2 border-[#c9c9c9]" : "border-b border-[#333]", i === 4 && "mt-1")}
      >
        {g.icons.map((n, k) => (
          <Icon key={k} name={n} />
        ))}
      </div>
    ))}
  </div>
);

const paletteTabs = ["公制", "义", "基本", "车道", "路肩", "中央带", "路缘", "边坡", "桥梁", "常规", "挡土结构", "条件", "道路", "铁路"];
const palette = ["部件1", "短挡墙B", "部件1", "垂直挡墙", "部件1"];

const ToolPalettes = () => (
  <aside className="flex w-[189px] shrink-0 bg-[#5d5b5d]">
    <div className="flex w-[14px] flex-col border-l border-[#474648] pt-[15px] text-[#a4a4a4]">
      {paletteTabs.map((t, i) => (
        <VerticalTab key={i} label={t} className={clsx("basis-8 shrink border-r", i === 1 ? "border-r-transparent text-[#eee]" : "bg-[#535254]")} />
      ))}
    </div>
    <div className="flex-1">
      <h2 className="h-[13px] bg-[#555456] pl-2 text-[7px] leading-[13px] text-[#dadada]">TOOL PALETTES - CIVIL 公制部件</h2>
      <ul className="flex flex-col gap-[6px] pl-[3px] pt-[5px] text-[7px] leading-none text-[#e0e0e0]">
        {palette.map((p, i) => (
          <li key={i}>
            <button className="flex items-center gap-[2px]">
              <span className="size-[18px] border border-[#333] bg-white" />
              {p}
            </button>
          </li>
        ))}
      </ul>
    </div>
  </aside>
);

/* ---------- status bar ---------- */

const statusItems: string[] = [
  "sGrid", "sDots", "v", "|", "sOrtho", "sPolar", "v", "sIso", "v", "|", "sBox", "sAngle", "v", "sLeaf", "|", "sPeople", "v", "|",
  "sCube", "v", "|", "sManBlue", "sMan", "sMan", "1:1.1", "v", "|", "gear", "v", "sPlus", "|", "sEarth", "1.4000", "sTree", "|",
  "sBall", "sHw", "sPic", "|", "sFull", "sMenu",
];

const StatusItem = ({ item }: { item: string }) => {
  if (item === "v") return <Caret />;
  if (item === "|") return <span className="h-3 w-px bg-[#414042]" />;
  if (glyphs[item]) {
    return (
      <button aria-label={item}>
        <Icon name={item} className="size-[9px]" />
      </button>
    );
  }
  return <button className="whitespace-nowrap">{item}</button>;
};

const StatusBar = () => (
  <footer className="flex h-4 shrink-0 items-stretch bg-[#38373a] text-[7px] leading-none text-[#dcdcdc]">
    <div className="flex w-[280px] items-start pl-1 pt-px">
      {["模型", "布局1", "布局2"].map((t, i) => (
        <button
          key={t}
          className={clsx(
            "h-[11px] px-[6px] [clip-path:polygon(0_0,100%_0,calc(100%-4px)_100%,4px_100%)]",
            i === 0 ? "bg-[#88888a] font-bold text-white" : "bg-[#4e4d50] text-[#8b8b8d]",
          )}
        >
          {t}
        </button>
      ))}
      <button className="ml-1 h-[11px] text-[9px] text-[#bbb]">+</button>
    </div>
    <div className="mt-[3px] flex w-[116px] items-center bg-linear-to-r from-transparent from-[16px] to-white to-[16px] pr-1">
      <svg viewBox="0 0 16 14" className="-mt-[3px] h-4 w-[17px]">
        <path d="M2 1l12-1 2 11-11 3-5-4z" fill="#e8502a" />
        <path d="M12 3c-4-1-7 0-7 2 0 3 7 1 7 4 0 2-5 2-8 1" fill="none" stroke="#fff" strokeWidth="1.800" />
      </svg>
      <div className="flex flex-1 items-center justify-between pl-[2px] text-[8px] font-bold text-[#1d6dc0]">
        <span>中</span>
        <span>°,</span>
        <svg viewBox="0 0 80 12" className="h-[10px] w-[70px]" fill="none" stroke="#1d6dc0" strokeWidth="1.300">
          <circle cx="7" cy="6" r="4.500" />
          <path d="M5 4v1M9 4v1M4.500 7c1 2 4 2 5 0" />
          <rect x="20" y="1" width="4" height="6" rx="2" fill="#1d6dc0" />
          <path d="M18 5c0 5 8 5 8 0M22 9v3" />
          <path d="M32 2h10v8H32zM34 4.500h6M34 7h6" />
          <g stroke="#a9adb2">
            <circle cx="48" cy="3" r="1.500" />
            <path d="M48 5v5h3M51 7l3 4M52 6h3v3" />
          </g>
          <path d="M58 3l3-2h4l3 2-1 3h-1v5h-6V6h-1z" fill="#1d6dc0" stroke="none" />
          <path d="M72 1h3v4h-3zM76 1h3v4h-3zM72 7h3v4h-3zM76 7h3v4h-3z" fill="#1d6dc0" stroke="none" />
        </svg>
      </div>
    </div>
    <div className="ml-auto flex w-[438px] items-center justify-between bg-[#59585a] px-[3px]">
      <button className="font-bold">模型</button>
      {statusItems.map((s, i) => (
        <StatusItem key={i} item={s} />
      ))}
    </div>
  </footer>
);

const Watermark = () => (
  <div className="absolute bottom-[27px] right-[35px] flex items-center gap-[5px] text-white">
    <svg viewBox="0 0 42 36" className="h-9 w-[42px]">
      <path d="M15 0C6 0 0 6 0 13c0 4 2 7 6 10l-2 5 6-3c10 2 20-3 20-12C30 6 24 0 15 0z" fill="#f5f5f5" />
      <path d="M28 12c-8 0-13 5-13 11s6 12 16 11l6 2-2-4c4-2 6-5 6-9 0-6-5-11-13-11z" fill="#f5f5f5" stroke="#55545a" />
      <g fill="#444">
        <circle cx="9" cy="9" r="2" />
        <circle cx="20" cy="9" r="2" />
        <circle cx="24" cy="19" r="1.700" />
        <circle cx="33" cy="19" r="1.700" />
      </g>
    </svg>
    <span className="text-[26px] leading-[36px] [font-family:'Noto_Sans_CJK_SC',sans-serif]">桃花源21bc</span>
  </div>
);

export default function App() {
  return (
    <div className="relative flex h-screen flex-col overflow-hidden bg-[#373638] [font-family:'Open_Sans','Noto_Sans_CJK_SC',sans-serif]">
      <header className="shrink-0">
        <div className="flex">
          <button aria-label="application menu" className="flex w-[22px] items-center justify-center bg-linear-to-b from-[#b0b0b0] to-[#787878]">
            <svg viewBox="0 0 22 22" className="size-[22px]">
              <path d="M1 16L8 0h3l5 16h-4l-1-3-5 1-1 2z" fill="#1785c4" />
              <path d="M8 5l2 5-4 1z" fill="#c9dce8" />
              <path d="M17 8h4l-2 2z" fill="#222" />
              <text x="5" y="21" fontSize="5" fontWeight="bold" fill="#222">C3D</text>
            </svg>
          </button>
          <div className="min-w-0 flex-1">
            <TitleBar />
            <RibbonTabs />
          </div>
        </div>
        <Ribbon />
        <DocTabs />
      </header>
      <div className="flex min-h-0 flex-1">
        <Toolspace />
        <Viewport />
        <ToolStrip />
        <ToolPalettes />
      </div>
      <StatusBar />
      <Watermark />
    </div>
  );
}
